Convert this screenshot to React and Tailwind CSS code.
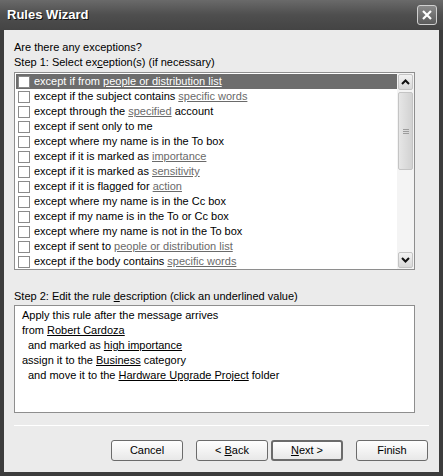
import React from "react";

const exceptions = [
  ["except if from ", "people or distribution list", ""],
  ["except if the subject contains ", "specific words", ""],
  ["except through the ", "specified", " account"],
  ["except if sent only to me", "", ""],
  ["except where my name is in the To box", "", ""],
  ["except if it is marked as ", "importance", ""],
  ["except if it is marked as ", "sensitivity", ""],
  ["except if it is flagged for ", "action", ""],
  ["except where my name is in the Cc box", "", ""],
  ["except if my name is in the To or Cc box", "", ""],
  ["except where my name is not in the To box", "", ""],
  ["except if sent to ", "people or distribution list", ""],
  ["except if the body contains ", "specific words", ""],
];

function Chevron({ up }) {
  return (
    <svg width="9" height="6" viewBox="0 0 9 6">
      <polyline
        points={up ? "1,5 4.5,1.5 8,5" : "1,1 4.5,4.5 8,1"}
        fill="none"
        stroke="#111"
        strokeWidth="2"
      />
    </svg>
  );
}

function Button({ children, isDefault }) {
  return (
    <button
      className={`w-[72px] h-[21px] rounded-[3px] bg-gradient-to-b from-[#fefefe] to-[#e8e8e8] text-[11px] text-black leading-none ${
        isDefault ? "border-2 border-[#6b6b6b]" : "border border-[#6b6b6b]"
      }`}
    >
      {children}
    </button>
  );
}

export default function App() {
  return (
    <div
      className="w-[443px] h-[476px] flex flex-col bg-[#3c3c3c] text-black"
      style={{ fontFamily: '"Liberation Sans", Arial, sans-serif' }}
    >
      {/* Title bar */}
      <div className="h-[30px] flex items-center justify-between pl-[7px] pr-[6px] bg-gradient-to-b from-[#6a6a6a] via-[#4e4e4e] to-[#444444]">
        <span className="text-[13px] font-bold text-white [text-shadow:1px_1px_0_#111]">
          Rules Wizard
        </span>
        <div className="w-[20px] h-[20px] rounded-[3px] border border-[#d0d0d0] bg-gradient-to-b from-[#8a8a8a] to-[#5c5c5c] flex items-center justify-center">
          <svg width="12" height="12" viewBox="0 0 12 12">
            <path d="M2 2 L10 10 M10 2 L2 10" stroke="#fff" strokeWidth="2.2" />
          </svg>
        </div>
      </div>

      {/* Body */}
      <div className="flex-1 mx-[4px] mb-[4px] bg-[#ebebeb] pl-[10px] pr-[10px] pt-[10px] text-[11px] leading-[15px]">
        <div>Are there any exceptions?</div>
        <div>
          Step 1: Select ex<span className="underline">c</span>eption(s) (if necessary)
        </div>

        {/* Exceptions list */}
        <div className="mt-[2px] w-[401px] h-[198px] border border-[#8e8e8e] bg-white flex">
          <div className="flex-1 pt-[1px] pl-[1px]">
            {exceptions.map(([a, link, b], i) => (
              <div
                key={i}
                className={`h-[15px] flex items-center gap-[4px] pl-[2px] ${
                  i === 0 ? "bg-[#6d6d6d] text-white" : ""
                }`}
              >
                <div className="w-[12px] h-[12px] border border-[#8a8a8a] bg-white shrink-0" />
                <span className="whitespace-nowrap">
                  {a}
                  {link && (
                    <span className={i === 0 ? "underline" : "underline text-[#6a6a6a]"}>
                      {link}
                    </span>
                  )}
                  {b}
                </span>
              </div>
            ))}
          </div>

          {/* Scrollbar */}
          <div className="w-[17px] bg-[#f4f4f4] flex flex-col pt-[1px] pb-[1px]">
            <div className="h-[16px] mx-[1px] rounded-[2px] border border-[#c4c4c4] bg-gradient-to-b from-[#f2f2f2] to-[#d8d8d8] flex items-center justify-center">
              <Chevron up />
            </div>
            <div className="h-[78px] mt-[2px] mx-[1px] rounded-[2px] border border-[#c4c4c4] bg-gradient-to-r from-[#e6e6e6] to-[#d2d2d2] flex flex-col items-center justify-center gap-[1px]">
              <div className="w-[6px] h-px bg-[#9c9c9c]" />
              <div className="w-[6px] h-px bg-[#9c9c9c]" />
              <div className="w-[6px] h-px bg-[#9c9c9c]" />
            </div>
            <div className="flex-1" />
            <div className="h-[16px] mx-[1px] rounded-[2px] border border-[#c4c4c4] bg-gradient-to-b from-[#f2f2f2] to-[#d8d8d8] flex items-center justify-center">
              <Chevron />
            </div>
          </div>
        </div>

        <div className="mt-[19px]">
          Step 2: Edit the rule <span className="underline">d</span>escription (click an underlined value)
        </div>

        {/* Description */}
        <div className="mt-[1px] w-[401px] h-[108px] border border-[#8e8e8e] bg-white pt-[2px] pl-[7px]">
          <div>Apply this rule after the message arrives</div>
          <div>
            from <span className="underline">Robert Cardoza</span>
          </div>
          <div className="pl-[6px]">
            and marked as <span className="underline">high importance</span>
          </div>
          <div>
            assign it to the <span className="underline">Business</span> category
          </div>
          <div className="pl-[6px]">
            and move it to the <span className="underline">Hardware Upgrade Project</span> folder
          </div>
        </div>

        <div className="mt-[12px] h-px bg-[#a9a9a9] border-b border-white" />

        <div className="mt-[14px] flex justify-end gap-[13px] pr-[1px]">
          <Button>Cancel</Button>
          <div className="flex gap-[3px]">
            <Button>
              &lt; <span className="underline">B</span>ack
            </Button>
            <Button isDefault>
              <span className="underline">N</span>ext &gt;
            </Button>
          </div>
          <Button>Finish</Button>
        </div>
      </div>
    </div>
  );
}
